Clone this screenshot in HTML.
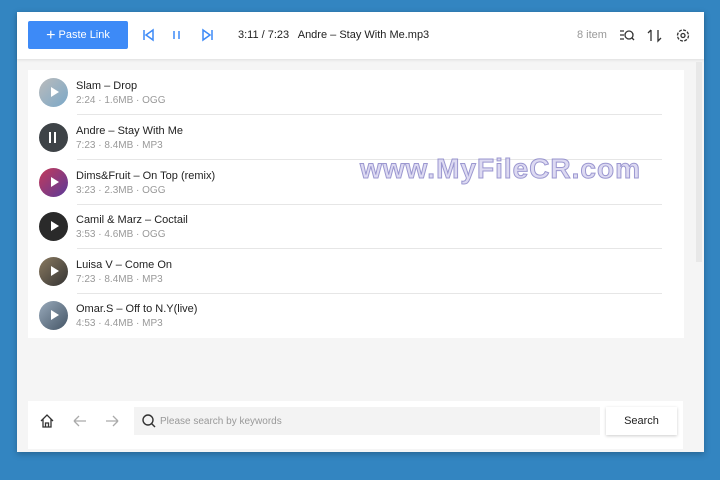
<!DOCTYPE html>
<html><head><style>
*{margin:0;padding:0;box-sizing:border-box}
body{width:720px;height:480px;background:#3385c1;font-family:"Liberation Sans",sans-serif;position:relative;overflow:hidden}
.win{position:absolute;left:17px;top:12px;width:687px;height:440px;background:#f5f5f5;box-shadow:0 2px 6px rgba(0,0,0,.25)}
.top{position:absolute;left:0;top:0;width:687px;height:47px;background:#fff;box-shadow:0 1px 3px rgba(0,0,0,.1)}
.btn{position:absolute;left:11px;top:9px;width:100px;height:28px;background:#3d8af7;color:#fff;font-size:11px;line-height:28px;text-align:center;border-radius:2px}
.t{position:absolute;font-size:11px;color:#222;white-space:nowrap}
.card{position:absolute;left:11px;top:58px;width:656px;height:268px;background:#fff}
.row{position:absolute;left:0;width:656px;height:45px}
.av{position:absolute;left:11px;top:8px;width:29px;height:29px;border-radius:50%}
.av:after{content:"";position:absolute;left:12px;top:9px;border-left:8px solid #fff;border-top:5.5px solid transparent;border-bottom:5.5px solid transparent}
.av.p:after{left:10px;top:9px;width:3px;height:11px;border:none;border-left:2px solid #fff;border-right:2px solid #fff}
.ti{position:absolute;left:48px;top:10px;font-size:11px;color:#222}
.su{position:absolute;left:48px;top:25px;font-size:10px;color:#999}
.div{position:absolute;left:49px;right:22px;bottom:0;height:1px;background:#e6e6e6}
.bot{position:absolute;left:11px;top:389px;width:655px;height:48px;background:#fff}
.sb{position:absolute;left:106px;top:6px;width:466px;height:28px;background:#f3f3f3}
.sbtn{position:absolute;left:578px;top:6px;width:71px;height:28px;background:#fff;box-shadow:0 1px 3px rgba(0,0,0,.2);font-size:11px;text-align:center;line-height:28px;color:#222}
.wm{position:absolute;left:343px;top:141px;font-size:28px;font-weight:bold;color:#d8d4f0;-webkit-text-stroke:1px #8a86c8;letter-spacing:1px;opacity:.85}
</style></head><body>
<div class="win">
 <div class="top">
  <div class="btn"><span style="font-size:16px;vertical-align:-2px">+</span> Paste Link</div>
  <svg style="position:absolute;left:125px;top:16px" width="80" height="14" fill="none" stroke="#3d8af7" stroke-width="1.5">
   <path d="M2 2V12M11 2L4 7L11 12Z"/>
   <path d="M32 3V11M37 3V11"/>
   <path d="M61 2L68 7L61 12ZM70 2V12"/>
  </svg>
  <div class="t" style="left:221px;top:17px">3:11 / 7:23 &nbsp; Andre – Stay With Me.mp3</div>
  <div class="t" style="left:560px;top:17px;color:#999">8 item</div>
  <svg style="position:absolute;left:602px;top:16px" width="75" height="15" fill="none" stroke="#333" stroke-width="1.3">
   <path d="M1 3H5M1 7H5M1 11H5"/><circle cx="10" cy="7" r="4"/><path d="M13 10L15 12"/>
   <path d="M32 2V13M29 5L32 2M39 2V13L42 10"/>
   <circle cx="64" cy="7.5" r="2"/><circle cx="64" cy="7.5" r="5.5" stroke-dasharray="3 1.3"/>
  </svg>
 </div>
 <div style="position:absolute;left:679px;top:50px;width:6px;height:200px;background:#e8e8e8"></div>
 <div class="card">
  <div class="row" style="top:0"><div class="av" style="background:linear-gradient(135deg,#bbb,#7aa8c8)"></div><div class="ti">Slam – Drop</div><div class="su">2:24 · 1.6MB · OGG</div><div class="div"></div></div>
  <div class="row" style="top:45px"><div class="av p" style="background:#3e4347"></div><div class="ti">Andre – Stay With Me</div><div class="su">7:23 · 8.4MB · MP3</div><div class="div"></div></div>
  <div class="row" style="top:90px"><div class="av" style="background:linear-gradient(135deg,#c43a5a,#5a3a9a)"></div><div class="ti">Dims&amp;Fruit – On Top (remix)</div><div class="su">3:23 · 2.3MB · OGG</div><div class="div"></div></div>
  <div class="row" style="top:134px"><div class="av" style="background:#2a2a2a"></div><div class="ti">Camil &amp; Marz – Coctail</div><div class="su">3:53 · 4.6MB · OGG</div><div class="div"></div></div>
  <div class="row" style="top:179px"><div class="av" style="background:linear-gradient(135deg,#8a7a60,#333)"></div><div class="ti">Luisa V – Come On</div><div class="su">7:23 · 8.4MB · MP3</div><div class="div"></div></div>
  <div class="row" style="top:223px"><div class="av" style="background:linear-gradient(135deg,#9ab,#456)"></div><div class="ti">Omar.S – Off to N.Y(live)</div><div class="su">4:53 · 4.4MB · MP3</div></div>
 </div>
 <div class="wm">www.MyFileCR.com</div>
 <div class="bot">
  <svg style="position:absolute;left:11px;top:12px" width="90" height="16" fill="none" stroke="#333" stroke-width="1.3">
   <path d="M2 8L8 2L14 8M4 6V14H12V6M6.5 14V10H9.5V14"/>
   <path stroke="#aaa" d="M35 8H47M35 8L40 3M35 8L40 13"/>
   <path stroke="#aaa" d="M67 8H79M79 8L74 3M79 8L74 13"/>
  </svg>
  <div class="sb"><svg style="position:absolute;left:8px;top:7px" width="14" height="15" fill="none" stroke="#333" stroke-width="1.4"><circle cx="6" cy="6" r="5"/><path d="M9.5 9.5L13 13"/></svg><span style="position:absolute;left:26px;top:9px;font-size:10px;color:#999">Please search by keywords</span></div>
  <div class="sbtn">Search</div>
 </div>
</div>
</body></html>
